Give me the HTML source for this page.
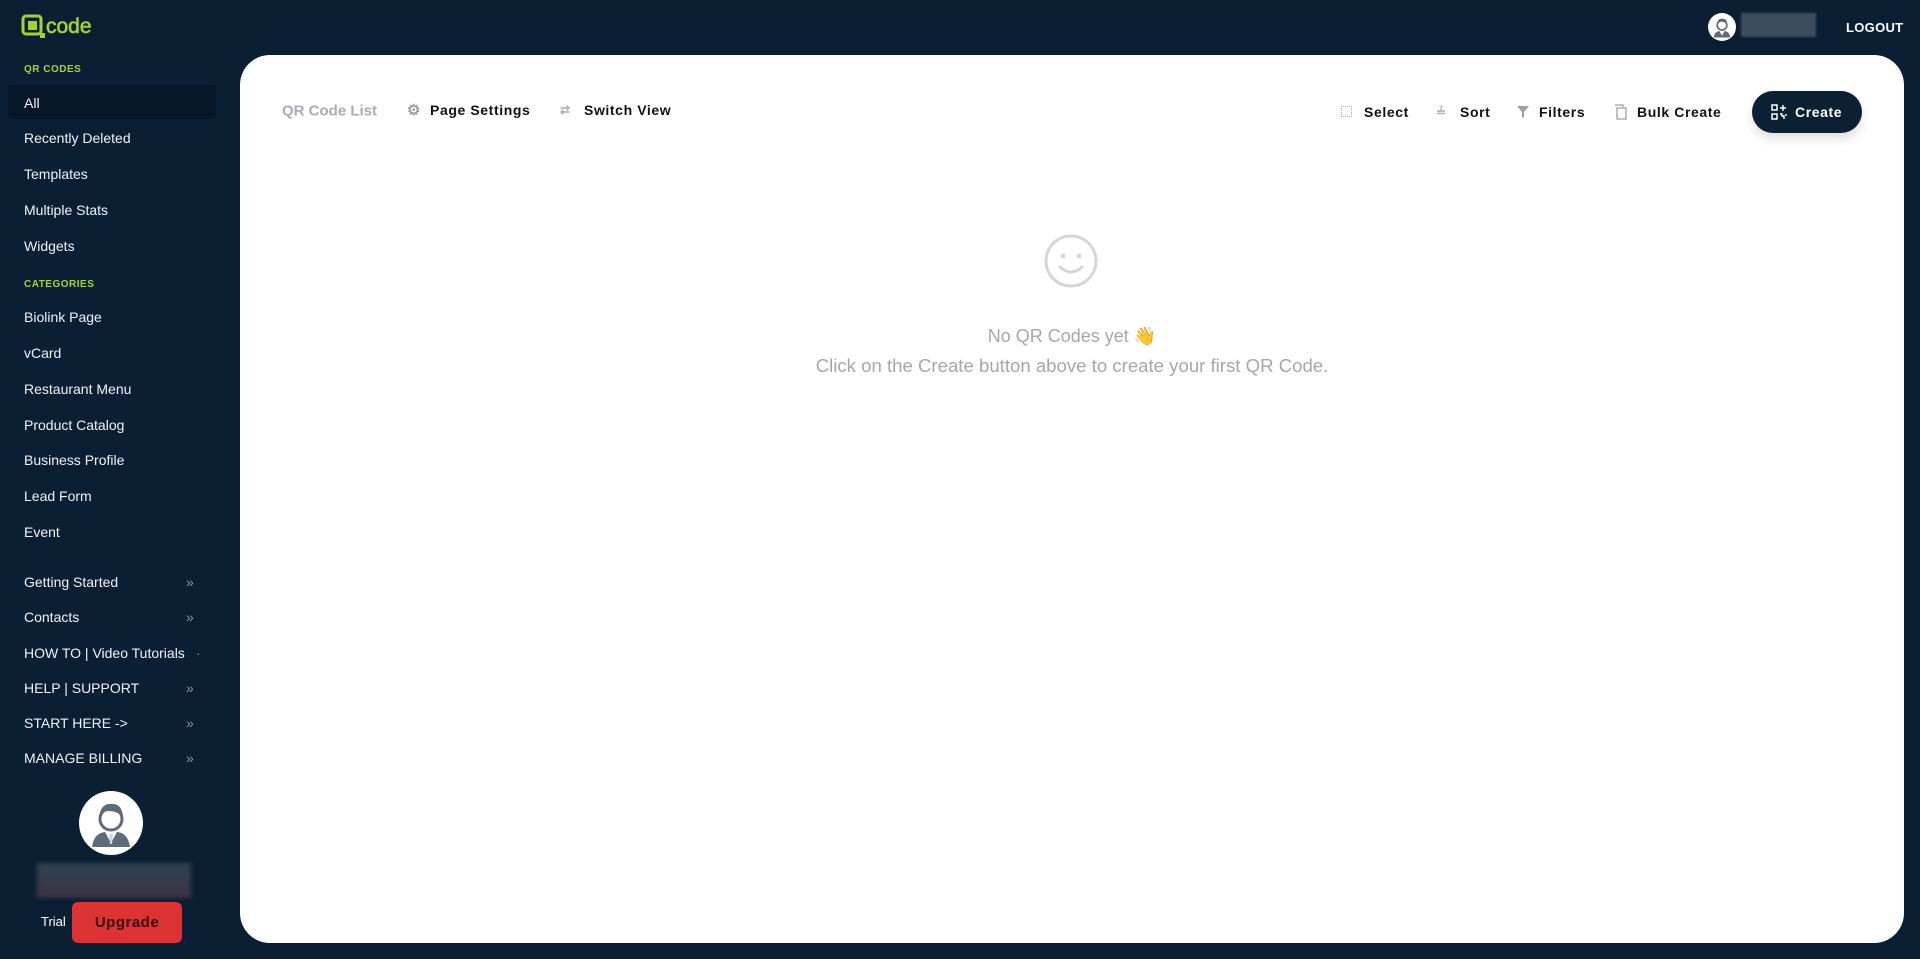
<!DOCTYPE html>
<html><head><meta charset="utf-8"><style>
*{box-sizing:border-box;margin:0;padding:0}
body{width:1920px;height:959px;background:#0a1f33;font-family:"Liberation Sans",sans-serif;position:relative;overflow:hidden;color:#fff}
.a{position:absolute;white-space:nowrap}
.sec{color:#a3d42a;font-size:10px;font-weight:bold;letter-spacing:.5px;left:24px}
.it{left:24px;font-size:14px;color:#f0f3f6;transform:translateY(-50%)}
.chev{left:186px;font-size:14px;color:#8a96a3;transform:translateY(-50%)}
.card{left:240px;top:55px;width:1664px;height:888px;background:#fff;border-radius:30px}
.tb{font-size:14px;font-weight:bold;color:#111;letter-spacing:.6px;transform:translateY(-50%)}
</style></head><body>
<svg class="a" style="left:21px;top:14px" width="80" height="26" viewBox="0 0 80 26"><rect x="2" y="2" width="18" height="18" rx="3" fill="none" stroke="#a3d42a" stroke-width="3"/><rect x="7" y="7" width="9" height="9" fill="#a3d42a"/><rect x="19" y="19" width="5" height="5" fill="#a3d42a"/><text x="25" y="19" font-family="Liberation Sans" font-size="21" fill="#a3d42a" stroke="#a3d42a" stroke-width=".6">code</text></svg>
<div class="a sec" style="top:64px">QR CODES</div>
<div class="a" style="left:8px;top:85px;width:208px;height:34px;background:#071727;border-radius:4px"></div>
<div class="a it" style="top:103px">All</div>
<div class="a it" style="top:138px">Recently Deleted</div>
<div class="a it" style="top:174px">Templates</div>
<div class="a it" style="top:210px">Multiple Stats</div>
<div class="a it" style="top:246px">Widgets</div>
<div class="a sec" style="top:279px">CATEGORIES</div>
<div class="a it" style="top:317px">Biolink Page</div>
<div class="a it" style="top:353px">vCard</div>
<div class="a it" style="top:389px">Restaurant Menu</div>
<div class="a it" style="top:425px">Product Catalog</div>
<div class="a it" style="top:460px">Business Profile</div>
<div class="a it" style="top:496px">Lead Form</div>
<div class="a it" style="top:532px">Event</div>
<div class="a it" style="top:582px">Getting Started</div><div class="a chev" style="top:582px">»</div>
<div class="a it" style="top:617px">Contacts</div><div class="a chev" style="top:617px">»</div>
<div class="a it" style="top:653px">HOW TO | Video Tutorials</div><div class="a chev" style="top:653px;left:196px">·</div>
<div class="a it" style="top:688px">HELP | SUPPORT</div><div class="a chev" style="top:688px">»</div>
<div class="a it" style="top:723px">START HERE -&gt;</div><div class="a chev" style="top:723px">»</div>
<div class="a it" style="top:758px">MANAGE BILLING</div><div class="a chev" style="top:758px">»</div>
<svg class="a" style="left:79px;top:791px" width="64" height="64" viewBox="0 0 64 64"><circle cx="32" cy="32" r="32" fill="#fff"/><circle cx="32" cy="28" r="11" fill="#fff" stroke="#5e6b78" stroke-width="3"/><path d="M20 26 Q22 12 32 13 Q43 12 44 26 Q38 20 30 20 Q24 20 20 26Z" fill="#5e6b78"/><path d="M13 56 Q15 42 26 41 L32 52 L38 41 Q49 42 51 56Z" fill="#5e6b78"/><path d="M30 43h4l-1 10h-2z" fill="#cfd6dc"/></svg>
<div class="a" style="left:37px;top:863px;width:154px;height:35px;background:linear-gradient(180deg,#3a4a5a,#4a3a48);filter:blur(2px);opacity:.8"></div>
<div class="a" style="left:41px;top:914px;font-size:13px">Trial</div>
<div class="a" style="left:72px;top:902px;width:110px;height:41px;background:#dc3232;border-radius:6px;color:#3a0c0c;font-weight:bold;font-size:15px;text-align:center;line-height:41px;letter-spacing:.5px">Upgrade</div>
<svg class="a" style="left:1708px;top:13px" width="28" height="28" viewBox="0 0 64 64"><circle cx="32" cy="32" r="32" fill="#fff"/><circle cx="32" cy="28" r="11" fill="#fff" stroke="#5e6b78" stroke-width="4"/><path d="M20 26 Q22 12 32 13 Q43 12 44 26 Q38 20 30 20 Q24 20 20 26Z" fill="#5e6b78"/><path d="M13 56 Q15 42 26 41 L32 52 L38 41 Q49 42 51 56Z" fill="#5e6b78"/></svg>
<div class="a" style="left:1741px;top:13px;width:75px;height:24px;background:#3c4d5e;filter:blur(1px)"></div>
<div class="a" style="left:1846px;top:20px;font-size:13px;font-weight:bold;letter-spacing:.3px">LOGOUT</div>
<div class="a card"></div>
<div class="a tb" style="left:282px;top:111px;color:#a7acb5;font-size:15px;letter-spacing:0">QR Code List</div>
<div class="a tb" style="left:407px;top:110px;color:#9aa0aa;font-size:15px">⚙</div>
<div class="a tb" style="left:430px;top:110px">Page Settings</div>
<div class="a tb" style="left:560px;top:110px;color:#aab;font-size:12px">⇄</div>
<div class="a tb" style="left:584px;top:110px">Switch View</div>
<div class="a" style="left:1341px;top:106px;width:11px;height:11px;border:1px dotted #aaa"></div>
<div class="a tb" style="left:1364px;top:112px">Select</div>
<div class="a tb" style="left:1436px;top:112px;color:#aab;font-size:12px">≟</div>
<div class="a tb" style="left:1460px;top:112px">Sort</div>
<svg class="a" style="left:1517px;top:106px" width="12" height="12" viewBox="0 0 12 12"><path d="M0 0h12L7 6v6L5 11V6z" fill="#9aa0aa"/></svg>
<div class="a tb" style="left:1539px;top:112px">Filters</div>
<svg class="a" style="left:1614px;top:104px" width="13" height="16" viewBox="0 0 13 16"><path d="M1 1h8v2M3 4h9v11H3z" fill="none" stroke="#9aa0aa" stroke-width="1.3"/></svg>
<div class="a tb" style="left:1637px;top:112px">Bulk Create</div>
<div class="a" style="left:1752px;top:91px;width:110px;height:42px;background:#0b2033;border-radius:21px;box-shadow:0 6px 10px rgba(0,0,0,.12)"></div>
<svg class="a" style="left:1771px;top:104px" width="16" height="16" viewBox="0 0 16 16"><rect x="1" y="1" width="5" height="5" fill="none" stroke="#fff" stroke-width="1.5"/><rect x="1" y="10" width="5" height="5" fill="none" stroke="#fff" stroke-width="1.5"/><path d="M12 1v6M9 4h6M9 10h2v2h2v3M15 10v2" stroke="#fff" stroke-width="1.4" fill="none"/></svg>
<div class="a tb" style="left:1795px;top:112px;color:#fff">Create</div>
<svg class="a" style="left:1043px;top:233px" width="56" height="56" viewBox="0 0 56 56"><circle cx="28" cy="28" r="25" fill="none" stroke="#d4d6da" stroke-width="3"/><circle cx="20" cy="23" r="2.5" fill="#d4d6da"/><circle cx="36" cy="23" r="2.5" fill="#d4d6da"/><path d="M17 34 Q28 44 39 34" fill="none" stroke="#d4d6da" stroke-width="3" stroke-linecap="round"/></svg>
<div class="a" style="left:0;width:2144px;text-align:center;top:322px;font-size:18px;color:#a2a7b0">No QR Codes yet <span style="font-family:'Noto Sans CJK JP',sans-serif;color:#e8a920">👋</span></div>
<div class="a" style="left:0;width:2144px;text-align:center;top:355px;font-size:18.6px;color:#a2a7b0">Click on the Create button above to create your first QR Code.</div>
</body></html>
